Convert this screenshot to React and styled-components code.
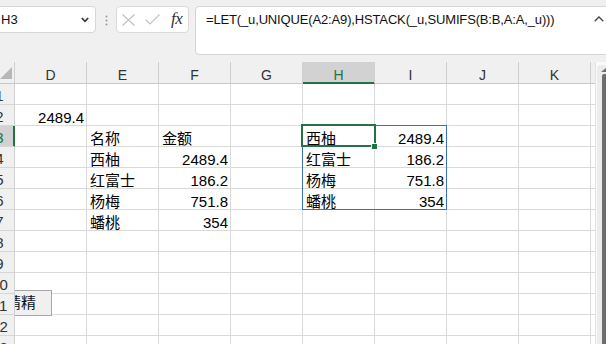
import React from 'react';
import styled, { createGlobalStyle } from 'styled-components';

const GlobalStyle = createGlobalStyle`
  html, body { margin: 0; padding: 0; background: #f0f0f0; overflow: hidden; }
  #root { width: 606px; height: 344px; }
`;

const FONT = `"Liberation Sans", "Noto Sans CJK SC", Arial, sans-serif`;
const GREEN = '#217346';

const Window = styled.div`
  width: 606px;
  height: 344px;
  overflow: hidden;
  background: #f0f0f0;
  font-family: ${FONT};
  color: #000;
  display: flex;
  flex-direction: column;
`;

const FormulaBar = styled.div`
  height: 62px;
  flex: none;
  box-sizing: border-box;
  padding-top: 6px;
  display: flex;
  align-items: flex-start;
`;

const NameBox = styled.div`
  margin-left: -14px;
  width: 110px;
  height: 27px;
  flex: none;
  box-sizing: border-box;
  background: #fff;
  border: 1px solid #d6d6d6;
  border-radius: 4px;
  padding: 0 6px 0 14px;
  display: flex;
  align-items: center;
  justify-content: space-between;
  font-size: 13px;
  color: #111;
`;

const Grip = styled.svg`
  flex: none;
  margin: 9px 8px 0 9px;
`;

const ButtonGroup = styled.div`
  width: 73px;
  height: 27px;
  flex: none;
  box-sizing: border-box;
  background: #fff;
  border: 1px solid #dadada;
  border-radius: 4px;
  padding-left: 5px;
  display: flex;
  align-items: center;
`;

const IconSlot = styled.span`
  display: flex;
  align-items: center;
  margin-right: ${(p) => p.$gap}px;
`;

const Fx = styled.span`
  font-family: "Liberation Serif", "DejaVu Serif", serif;
  font-style: italic;
  font-size: 17px;
  line-height: 17px;
  color: #333;
  letter-spacing: -0.5px;
  margin-top: -2px;
`;

const FormulaInput = styled.div`
  margin-left: 6px;
  margin-right: -10px;
  flex: 1;
  height: 49px;
  box-sizing: border-box;
  background: #fff;
  border: 1px solid #d4d4d4;
  border-radius: 4px;
  padding: 5px 11px 0 10px;
  display: flex;
  justify-content: space-between;
  align-items: flex-start;
`;

const FormulaText = styled.span`
  font-size: 13px;
  line-height: 16px;
  letter-spacing: -0.15px;
  color: #111;
  white-space: nowrap;
`;

const Caret = styled.svg`
  margin-top: 4px;
  flex: none;
`;

const Main = styled.div`
  flex: 1;
  display: flex;
  min-height: 0;
`;

const SheetArea = styled.div`
  position: relative;
  flex: 1;
  overflow: hidden;
`;

const SheetGrid = styled.div`
  margin-left: -15px;
  display: grid;
  grid-template-columns: 30px repeat(9, 72px);
  grid-template-rows: 22px;
  grid-auto-rows: 21px;
`;

const Corner = styled.div`
  box-sizing: border-box;
  background: #f0f0f0;
  border-right: 1px solid #cfcfcf;
  border-bottom: 1px solid #c8c8c8;
  display: flex;
  justify-content: flex-end;
  align-items: flex-end;
  padding: 0 2px 4px 0;
  position: relative;
  z-index: 2;
`;

const ColHeader = styled.div`
  box-sizing: border-box;
  background: ${(p) => (p.$active ? '#d2d2d2' : '#f0f0f0')};
  border-right: 1px solid #d0d0d0;
  border-bottom: 1px solid ${(p) => (p.$active ? GREEN : '#c8c8c8')};
  box-shadow: ${(p) => (p.$active ? `inset 0 -1px 0 ${GREEN}` : 'none')};
  color: ${(p) => (p.$active ? GREEN : '#333')};
  font-size: 14px;
  line-height: 14px;
  display: flex;
  justify-content: center;
  align-items: flex-end;
  padding-bottom: 1px;
`;

const RowHeader = styled.div`
  position: relative;
  z-index: 2;
  box-sizing: border-box;
  background: ${(p) => (p.$active ? '#d2d2d2' : '#f0f0f0')};
  border-right: 1px solid ${(p) => (p.$active ? GREEN : '#d0d0d0')};
  box-shadow: ${(p) => (p.$active ? `inset -1px 0 0 ${GREEN}` : 'none')};
  border-bottom: 1px solid #d6d6d6;
  color: ${(p) => (p.$active ? GREEN : '#333')};
  font-size: 15px;
  line-height: 15px;
  display: flex;
  justify-content: center;
  align-items: flex-end;
  padding-bottom: 1px;
`;

const Cell = styled.div`
  box-sizing: border-box;
  background: #fff;
  border-right: 1px solid #dadada;
  border-bottom: 1px solid #dadada;
  display: flex;
  align-items: flex-end;
  justify-content: ${(p) => (p.$num ? 'flex-end' : 'flex-start')};
  padding: ${(p) => (p.$num ? '0 2px 0 0' : '0 0 0 3px')};
  font-size: 15px;
  line-height: 15px;
  white-space: nowrap;
`;

const SpillBorder = styled.div`
  position: absolute;
  left: 302px;
  top: 63px;
  width: 145px;
  height: 85px;
  box-sizing: border-box;
  border: 1px solid #3b6dc0;
  z-index: 3;
  pointer-events: none;
`;

const ActiveBorder = styled.div`
  position: absolute;
  left: 301px;
  top: 62px;
  width: 75px;
  height: 23px;
  box-sizing: border-box;
  border: 2px solid ${GREEN};
  z-index: 4;
  pointer-events: none;
`;

const FillHandle = styled.div`
  position: absolute;
  left: 371px;
  top: 81px;
  width: 7px;
  height: 7px;
  box-sizing: border-box;
  background: ${GREEN};
  border: 1px solid #fff;
  z-index: 5;
`;

const Candidate = styled.div`
  position: absolute;
  left: 2px;
  top: 228px;
  width: 50px;
  height: 26px;
  box-sizing: border-box;
  background: #f0f0f0;
  border: 1px solid #a8a8a8;
  padding-left: 3px;
  font-size: 15px;
  line-height: 24px;
  color: #111;
  z-index: 1;
  white-space: nowrap;
`;

const VScroll = styled.div`
  width: 11px;
  flex: none;
  box-sizing: border-box;
  border-left: 1px solid #e2e2e2;
  background: #fafafa;
  display: flex;
  padding-top: 3px;
`;

const Track = styled.div`
  flex: 1;
  margin-left: 1px;
  background: #ececec;
  border-radius: 4px 0 0 0;
  display: flex;
  flex-direction: column;
  align-items: flex-end;
`;

const UpArrow = styled.svg`
  margin: 3px 0 0 0;
  flex: none;
`;

const Thumb = styled.div`
  margin-top: 2px;
  width: 4px;
  flex: 1;
  background: #6e6e6e;
  border-radius: 2px 0 0 0;
`;

const columns = ['D', 'E', 'F', 'G', 'H', 'I', 'J', 'K', 'L'];

const data = {
  2: { D: ['2489.4', true] },
  3: { E: ['名称'], F: ['金额'], H: ['西柚'], I: ['2489.4', true] },
  4: { E: ['西柚'], F: ['2489.4', true], H: ['红富士'], I: ['186.2', true] },
  5: { E: ['红富士'], F: ['186.2', true], H: ['杨梅'], I: ['751.8', true] },
  6: { E: ['杨梅'], F: ['751.8', true], H: ['蟠桃'], I: ['354', true] },
  7: { E: ['蟠桃'], F: ['354', true] },
};

const rows = Array.from({ length: 13 }, (_, i) => i + 1);

export default function App() {
  return (
    <>
      <GlobalStyle />
      <Window>
        <FormulaBar>
          <NameBox>
            <span>H3</span>
            <svg width="8" height="6" viewBox="0 0 8 6">
              <polyline points="0.8,1 4,4.4 7.2,1" fill="none" stroke="#333" strokeWidth="1.6" />
            </svg>
          </NameBox>
          <Grip width="3" height="11" viewBox="0 0 3 11">
            <circle cx="1.5" cy="1.5" r="1" fill="#9a9a9a" />
            <circle cx="1.5" cy="5.5" r="1" fill="#9a9a9a" />
            <circle cx="1.5" cy="9.5" r="1" fill="#9a9a9a" />
          </Grip>
          <ButtonGroup>
            <IconSlot $gap={10}>
              <svg width="13" height="12" viewBox="0 0 13 12">
                <path d="M0.5 0.5 L12.5 11.5 M12.5 0.5 L0.5 11.5" stroke="#c2c2c2" strokeWidth="1.2" fill="none" />
              </svg>
            </IconSlot>
            <IconSlot $gap={11}>
              <svg width="15" height="11" viewBox="0 0 15 11">
                <polyline points="0.5,5.5 5,10 14.5,0.5" stroke="#c2c2c2" strokeWidth="1.2" fill="none" />
              </svg>
            </IconSlot>
            <Fx>fx</Fx>
          </ButtonGroup>
          <FormulaInput>
            <FormulaText>=LET(_u,UNIQUE(A2:A9),HSTACK(_u,SUMIFS(B:B,A:A,_u)))</FormulaText>
            <Caret width="10" height="6" viewBox="0 0 10 6">
              <polyline points="0.7,5.3 5,1 9.3,5.3" stroke="#444" strokeWidth="1.3" fill="none" />
            </Caret>
          </FormulaInput>
        </FormulaBar>
        <Main>
          <SheetArea>
            <SheetGrid>
              <Corner>
                <svg width="12" height="12" viewBox="0 0 12 12">
                  <polygon points="0,12 12,0 12,12" fill="#b7b7b7" />
                </svg>
              </Corner>
              {columns.map((c) => (
                <ColHeader key={c} $active={c === 'H'}>
                  {c === 'L' ? '' : c}
                </ColHeader>
              ))}
              {rows.map((r) => (
                <React.Fragment key={r}>
                  <RowHeader $active={r === 3}>{r}</RowHeader>
                  {columns.map((c) => {
                    const v = data[r] && data[r][c];
                    return (
                      <Cell key={c} $num={v ? !!v[1] : false}>
                        {v ? v[0] : ''}
                      </Cell>
                    );
                  })}
                </React.Fragment>
              ))}
            </SheetGrid>
            <SpillBorder />
            <ActiveBorder />
            <FillHandle />
            <Candidate>精精</Candidate>
          </SheetArea>
          <VScroll>
            <Track>
              <UpArrow width="5" height="4" viewBox="0 0 5 4">
                <polygon points="0,4 5,0 5,4" fill="#6e6e6e" />
              </UpArrow>
              <Thumb />
            </Track>
          </VScroll>
        </Main>
      </Window>
    </>
  );
}
